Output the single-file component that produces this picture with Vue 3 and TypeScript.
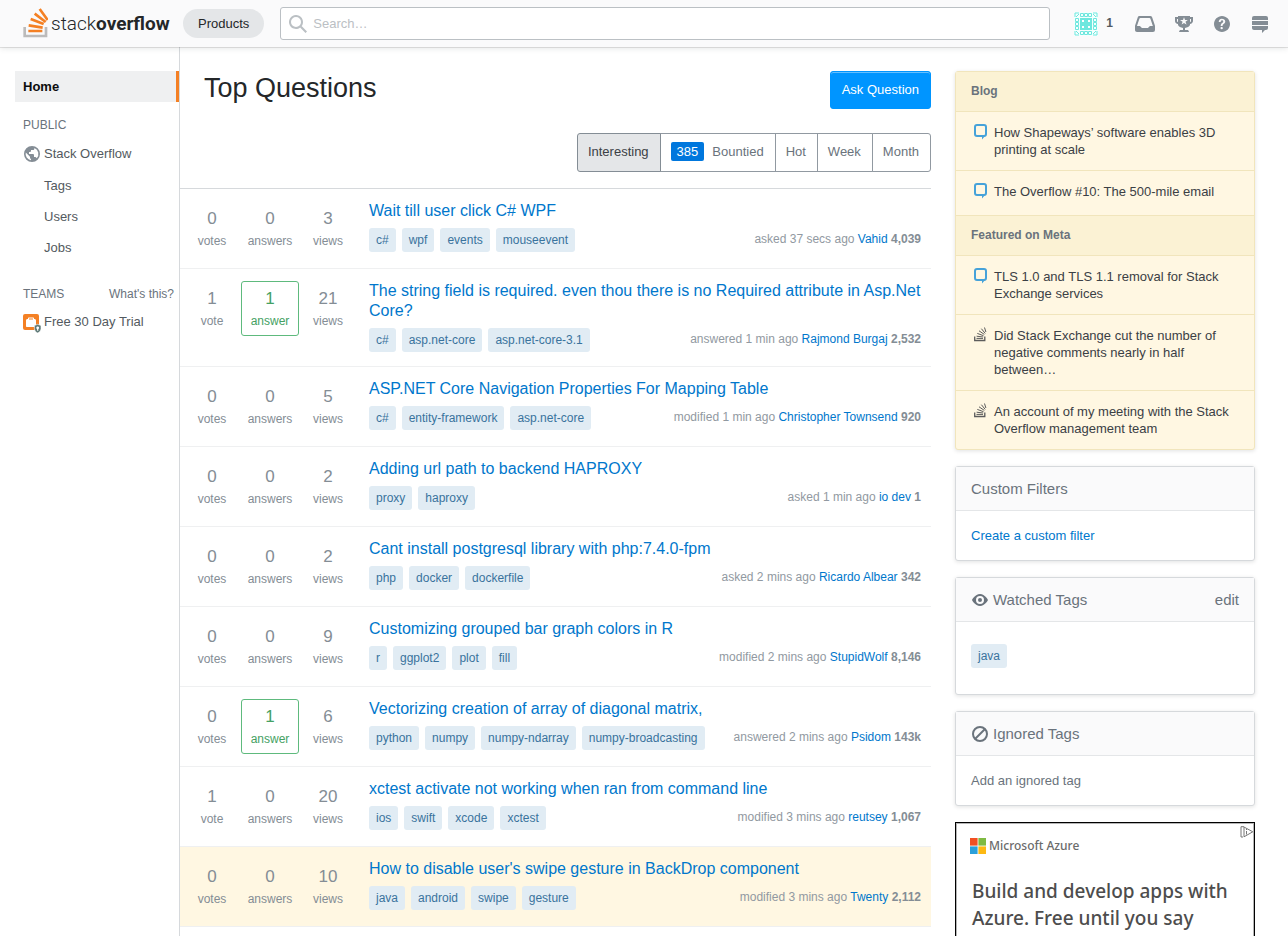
<script setup lang="ts">
import { ref } from 'vue'

interface Question {
  votes: number
  answers: number
  views: number
  title: string
  tags: string[]
  action: string
  user: string
  rep: string
  watched?: boolean
}

interface BulletinItem {
  icon: 'meta' | 'so'
  text: string
}

const questions: Question[] = [
  { votes: 0, answers: 0, views: 3, title: 'Wait till user click C# WPF', tags: ['c#', 'wpf', 'events', 'mouseevent'], action: 'asked 37 secs ago', user: 'Vahid', rep: '4,039' },
  { votes: 1, answers: 1, views: 21, title: 'The string field is required. even thou there is no Required attribute in Asp.Net Core?', tags: ['c#', 'asp.net-core', 'asp.net-core-3.1'], action: 'answered 1 min ago', user: 'Rajmond Burgaj', rep: '2,532' },
  { votes: 0, answers: 0, views: 5, title: 'ASP.NET Core Navigation Properties For Mapping Table', tags: ['c#', 'entity-framework', 'asp.net-core'], action: 'modified 1 min ago', user: 'Christopher Townsend', rep: '920' },
  { votes: 0, answers: 0, views: 2, title: 'Adding url path to backend HAPROXY', tags: ['proxy', 'haproxy'], action: 'asked 1 min ago', user: 'io dev', rep: '1' },
  { votes: 0, answers: 0, views: 2, title: 'Cant install postgresql library with php:7.4.0-fpm', tags: ['php', 'docker', 'dockerfile'], action: 'asked 2 mins ago', user: 'Ricardo Albear', rep: '342' },
  { votes: 0, answers: 0, views: 9, title: 'Customizing grouped bar graph colors in R', tags: ['r', 'ggplot2', 'plot', 'fill'], action: 'modified 2 mins ago', user: 'StupidWolf', rep: '8,146' },
  { votes: 0, answers: 1, views: 6, title: 'Vectorizing creation of array of diagonal matrix,', tags: ['python', 'numpy', 'numpy-ndarray', 'numpy-broadcasting'], action: 'answered 2 mins ago', user: 'Psidom', rep: '143k' },
  { votes: 1, answers: 0, views: 20, title: 'xctest activate not working when ran from command line', tags: ['ios', 'swift', 'xcode', 'xctest'], action: 'modified 3 mins ago', user: 'reutsey', rep: '1,067' },
  { votes: 0, answers: 0, views: 10, title: "How to disable user's swipe gesture in BackDrop component", tags: ['java', 'android', 'swipe', 'gesture'], action: 'modified 3 mins ago', user: 'Twenty', rep: '2,112', watched: true },
]

const bulletin: { heading: string; items: BulletinItem[] }[] = [
  {
    heading: 'Blog',
    items: [
      { icon: 'meta', text: 'How Shapeways’ software enables 3D printing at scale' },
      { icon: 'meta', text: 'The Overflow #10: The 500-mile email' },
    ],
  },
  {
    heading: 'Featured on Meta',
    items: [
      { icon: 'meta', text: 'TLS 1.0 and TLS 1.1 removal for Stack Exchange services' },
      { icon: 'so', text: 'Did Stack Exchange cut the number of negative comments nearly in half between…' },
      { icon: 'so', text: 'An account of my meeting with the Stack Overflow management team' },
    ],
  },
]

const tabs: { label: string; count?: number }[] = [
  { label: 'Interesting' },
  { label: 'Bountied', count: 385 },
  { label: 'Hot' },
  { label: 'Week' },
  { label: 'Month' },
]

const activeTab = ref('Interesting')
const query = ref('')

const plural = (n: number, word: string): string => (n === 1 ? word : word + 's')
</script>

<template>
  <div class="page">
    <header class="topbar">
      <a class="logo" href="#" aria-label="Stack Overflow">
        <svg class="logo-mark" viewBox="0 0 75 90" width="25" height="30" fill="none" aria-hidden="true">
          <path d="M5 57V84H69V57" stroke="#bcbbbb" stroke-width="8" />
          <g stroke="#f48024" stroke-width="8">
            <path d="M16 69H58M17 52L59 59M23 33L62 48M35 17L68 42M50 3L74 36" />
          </g>
        </svg>
        <span class="logo-text"><span class="logo-light">stack</span><b>overflow</b></span>
      </a>
      <button class="products" type="button">Products</button>
      <form class="search" role="search" @submit.prevent>
        <svg class="search-icon" width="18" height="18" viewBox="0 0 18 18" aria-hidden="true">
          <path d="M18 16.5l-5.14-5.18h-.35a7 7 0 10-1.19 1.19v.35L16.5 18l1.5-1.5zM12 7A5 5 0 112 7a5 5 0 0110 0z" />
        </svg>
        <input v-model="query" type="text" placeholder="Search…" aria-label="Search" />
      </form>
      <nav class="tools" aria-label="Account">
        <a class="me" href="#" aria-label="Profile, reputation 1">
          <svg width="24" height="24" viewBox="0 0 24 24" aria-hidden="true">
            <rect width="24" height="24" fill="#f4fffe" />
            <rect x="6" y="6" width="12" height="12" fill="#6ee7de" />
            <path d="M8 8h2v2H8zM14 8h2v2h-2zM8 14h2v2H8zM14 14h2v2h-2z" fill="#fff" />
            <g fill="none" stroke="#6ee7de">
              <path d="M1 5V1h4M19 1h4v4M1 19v4h4M23 19v4h-4M2 5l3-3M19 2l3 3M2 19l3 3M22 19l-3 3" />
              <path d="M6.500 1.500h3v3h-3zM10.500 1.500h3v3h-3zM14.500 1.500h3v3h-3zM6.500 19.500h3v3h-3zM10.500 19.500h3v3h-3zM14.500 19.500h3v3h-3zM1.500 6.500h3v3h-3zM1.500 10.500h3v3h-3zM1.500 14.500h3v3h-3zM19.500 6.500h3v3h-3zM19.500 10.500h3v3h-3zM19.500 14.500h3v3h-3z" />
            </g>
          </svg>
          <span class="my-rep">1</span>
        </a>
        <a href="#" aria-label="Inbox">
          <svg width="20" height="18" viewBox="0 0 20 18"><path d="M15.190 1H4.630c-.85 0-1.600.54-1.850 1.350L0 10.790V15c0 1.100.9 2 2 2h16a2 2 0 002-2v-4.210l-2.870-8.440A2 2 0 0015.190 1zm-.28 10l-2 2h-6l-2-2H1.960L4.400 3.680A1 1 0 015.350 3h9.120c.44 0 .83.28.96.7L17.860 11h-2.950z" /></svg>
        </a>
        <a href="#" aria-label="Achievements">
          <svg width="18" height="18" viewBox="0 0 18 18"><path d="M15 2V1H3v1H0v4c0 1.600 1.400 3 3 3v1c.4 1.500 3 2.600 5 3v2H5s-1 1.500-1 2h10c0-.4-1-2-1-2h-3v-2c2-.4 4.600-1.500 5-3V9c1.600-.2 3-1.400 3-3V2h-3zM3 7c-.5 0-1-.5-1-1V4h1v3zm8.400 2.500L9 8 6.600 9.400l1-2.700L5 5h3l1-2.700L10 5h2.800l-2.300 1.800 1 2.700h-.1zM16 6c0 .5-.5 1-1 1V4h1v2z" /></svg>
        </a>
        <a href="#" aria-label="Help">
          <svg width="18" height="18" viewBox="0 0 18 18"><path d="M9 1C4.640 1 1 4.640 1 9c0 4.360 3.640 8 8 8 4.360 0 8-3.640 8-8 0-4.360-3.640-8-8-8zm.81 12.130c-.02.71-.55 1.150-1.240 1.130-.66-.02-1.170-.49-1.150-1.200.02-.72.56-1.180 1.220-1.160.7.03 1.200.51 1.170 1.230zM11.770 8c-.59.66-1.780 1.090-2.050 1.970a4 4 0 00-.09.75c0 .05-.03.16-.18.16H7.880c-.16 0-.18-.1-.18-.15.06-1.350.66-2.200 1.830-2.880.39-.29.7-.75.7-1.240.01-1.240-1.640-1.820-2.350-.72-.21.33-.18.73-.18 1.100H5.750c0-1.970 1.030-3.260 3.030-3.260 1.750 0 3.470.87 3.470 2.830 0 .57-.2 1.050-.48 1.440z" /></svg>
        </a>
        <a href="#" aria-label="Site switcher">
          <svg width="18" height="18" viewBox="0 0 18 18"><path d="M15 1H3a2 2 0 00-2 2v2h16V3a2 2 0 00-2-2zM1 13c0 1.100.9 2 2 2h8v3l3-3h1a2 2 0 002-2v-2H1v2zm16-7H1v4h16V6z" /></svg>
        </a>
      </nav>
    </header>

    <div class="body">
      <nav class="side" aria-label="Primary">
        <a class="side-link home" href="#">Home</a>
        <div class="side-head"><span>PUBLIC</span></div>
        <a class="side-link with-icon" href="#">
          <svg width="18" height="18" viewBox="0 0 18 18" fill="#848d95" aria-hidden="true"><path d="M9 1a8 8 0 100 16A8 8 0 009 1zM8 15.320a6.460 6.460 0 01-4.300-2.740 6.460 6.460 0 01-.93-5.010L7 11.680v.8c0 .88.12 1.320 1 1.320v1.520zm5.720-2c-.2-.66-1-1.320-1.720-1.320h-1v-2c0-.44-.56-1-1-1H6V7h1c.44 0 1-.56 1-1V5h2c.88 0 1.400-.72 1.400-1.600v-.33a6.450 6.450 0 013.830 4.510 6.450 6.450 0 01-1.510 5.730v.01z" /></svg>
          Stack Overflow
        </a>
        <a class="side-link nested" href="#">Tags</a>
        <a class="side-link nested" href="#">Users</a>
        <a class="side-link nested" href="#">Jobs</a>
        <div class="side-head teams"><span>TEAMS</span><a href="#">What's this?</a></div>
        <a class="side-link with-icon" href="#">
          <svg width="18" height="22" viewBox="0 -3 18 22" aria-hidden="true">
            <rect width="16" height="16" rx="2" fill="#f48024" />
            <path d="M3 6.500C3 5.700 3.600 5 4.500 5H5V4.500c0-.6.400-1 1-1h4c.6 0 1 .4 1 1V5h.5c.8 0 1.500.7 1.500 1.500V12c0 .6-.4 1-1 1H4c-.6 0-1-.4-1-1zM6 4.500V5.500h4v-1z" fill="#fff" />
            <path d="M14.700 10.300l3.300 1.200v3c0 2.200-1.400 3.600-3.300 4.500-1.900-.9-3.300-2.300-3.300-4.500v-3z" fill="#5f7a77" stroke="#fff" stroke-width=".6" />
            <path d="M14.700 12.500a1.300 1.300 0 01.6 2.500v1.700h-1.200V15a1.300 1.300 0 01.6-2.500z" fill="#fff" />
          </svg>
          Free 30 Day Trial
        </a>
      </nav>

      <main class="main">
        <div class="main-head">
          <h1>Top Questions</h1>
          <button class="ask" type="button">Ask Question</button>
        </div>
        <div class="tabs" role="group" aria-label="Filter questions">
          <button
            v-for="tab in tabs"
            :key="tab.label"
            type="button"
            :class="{ active: tab.label === activeTab }"
            :aria-pressed="tab.label === activeTab"
            @click="activeTab = tab.label"
          >
            <span v-if="tab.count" class="bounty">{{ tab.count }}</span>{{ tab.label }}
          </button>
        </div>
        <div class="list">
          <article v-for="q in questions" :key="q.title" class="question" :class="{ watched: q.watched }">
            <div class="stats">
              <div class="stat"><span class="num">{{ q.votes }}</span><span>{{ plural(q.votes, 'vote') }}</span></div>
              <div class="stat" :class="{ answered: q.answers > 0 }"><span class="num">{{ q.answers }}</span><span>{{ plural(q.answers, 'answer') }}</span></div>
              <div class="stat"><span class="num">{{ q.views }}</span><span>{{ plural(q.views, 'view') }}</span></div>
            </div>
            <div class="summary">
              <h3><a href="#">{{ q.title }}</a></h3>
              <div class="meta">
                <div class="tags"><a v-for="t in q.tags" :key="t" class="tag" href="#">{{ t }}</a></div>
                <div class="started">{{ q.action }} <a href="#">{{ q.user }}</a> <b>{{ q.rep }}</b></div>
              </div>
            </div>
          </article>
        </div>
      </main>

      <aside class="aside">
        <section class="card bulletin">
          <template v-for="group in bulletin" :key="group.heading">
            <h2>{{ group.heading }}</h2>
            <a v-for="item in group.items" :key="item.text" class="news" href="#">
              <svg v-if="item.icon === 'meta'" width="14" height="16" viewBox="0 0 14 16" fill="none" aria-hidden="true">
                <rect x="1" y="1" width="11" height="11" rx="2" stroke="#46a2d9" stroke-width="2" />
                <path d="M6.500 12H11L8 15.500V13z" fill="#46a2d9" />
              </svg>
              <svg v-else width="14" height="16" viewBox="0 0 14 16" fill="none" stroke="#5c5c5c" aria-hidden="true">
                <path d="M.7 9.500V13.500H10.800V9.500" stroke-width="1.300" />
                <path d="M2.500 11.400H9M2.600 9.200L9.100 10M3.300 6.400L9.500 8.700M5 3.800L10.300 7.400M7.400 1.700L11.200 6.400M10.500.5L11.900 5" />
              </svg>
              <span>{{ item.text }}</span>
            </a>
          </template>
        </section>

        <section class="card">
          <h2>Custom Filters</h2>
          <div class="card-body"><a class="blue" href="#">Create a custom filter</a></div>
        </section>

        <section class="card">
          <h2>
            <svg width="18" height="18" viewBox="0 0 18 18" fill="#6a737c" aria-hidden="true"><path d="M9.060 3C4 3 1 9 1 9s3 6 8.060 6C14 15 17 9 17 9s-3-6-7.940-6zM9 13a4 4 0 110-8 4 4 0 010 8zm0-2a2 2 0 002-2 2 2 0 00-2-2 2 2 0 00-2 2 2 2 0 002 2z" /></svg>
            Watched Tags
            <a class="edit" href="#">edit</a>
          </h2>
          <div class="card-body roomy"><a class="tag" href="#">java</a></div>
        </section>

        <section class="card">
          <h2>
            <svg width="18" height="18" viewBox="0 0 18 18" fill="none" stroke="#6a737c" stroke-width="2" aria-hidden="true"><circle cx="9" cy="9" r="7" /><path d="M4 14L14 4" /></svg>
            Ignored Tags
          </h2>
          <div class="card-body"><a href="#">Add an ignored tag</a></div>
        </section>

        <section class="ad" aria-label="Advertisement">
          <svg class="adchoices" width="14" height="12" viewBox="0 0 14 12" fill="none" stroke="#777" aria-hidden="true">
            <path d="M4 .7H1V11h2M4 1L12.800 5.800L4 10.800Z" />
            <path d="M6.500 3v1M6.500 5v3.500" />
          </svg>
          <div class="azure">
            <svg width="16" height="16" viewBox="0 0 16 16" aria-hidden="true">
              <path fill="#f25022" d="M0 0h7.600v7.600H0z" /><path fill="#7fba42" d="M8.400 0H16v7.600H8.400z" />
              <path fill="#2ba0da" d="M0 8.400h7.600V16H0z" /><path fill="#fdb913" d="M8.400 8.400H16V16H8.400z" />
            </svg>
            Microsoft Azure
          </div>
          <p>Build and develop apps with Azure. Free until you say</p>
        </section>
      </aside>
    </div>
  </div>
</template>

<style>
html {
  background: #fff;
}
</style>

<style scoped>
.page {
  min-height: 100vh;
  display: flex;
  flex-direction: column;
  font-family: "Liberation Sans", Arial, sans-serif;
  font-size: 13px;
  line-height: 17px;
  color: #242729;
}
.page *,
.page {
  box-sizing: border-box;
}
a {
  color: inherit;
  text-decoration: none;
}
button,
input {
  font: inherit;
  margin: 0;
}
svg {
  flex: none;
  display: block;
}

/* Top bar */
.topbar {
  position: sticky;
  top: 0;
  z-index: 2;
  flex: none;
  height: 47px;
  padding: 0 19px 0 23px;
  display: flex;
  align-items: center;
  background: #fafafb;
  box-shadow: 0 1px 0 rgba(12, 13, 14, 0.1), 0 1px 6px rgba(59, 64, 69, 0.15);
}
.logo {
  width: 160px;
  flex: none;
  display: flex;
  align-items: center;
  gap: 3px;
  font-family: Roboto, sans-serif;
  font-size: 19px;
  line-height: 32px;
}
.logo-mark {
  margin-bottom: 2px;
}
.logo-text {
  padding-top: 1px;
}
.logo-light {
  font-weight: 300;
}
.products {
  height: 29px;
  padding: 0 15px;
  border: 0;
  border-radius: 15px;
  background: #e4e6e8;
  color: #242729;
}
.search {
  flex: 1;
  margin: 0 24px 0 16px;
  display: flex;
  align-items: center;
  height: 33px;
  border: 1px solid #bbc0c4;
  border-radius: 3px;
  background: #fff;
}
.search-icon {
  margin: 0 6px 0 8px;
  fill: #bbc0c4;
}
.search input {
  flex: 1;
  min-width: 0;
  height: 100%;
  border: 0;
  padding: 0;
  outline: 0;
  background: none;
}
.search input::placeholder {
  color: #bbc0c4;
  opacity: 1;
}
.tools {
  display: flex;
  align-items: center;
  gap: 20px;
  fill: #848d95;
}
.me {
  display: flex;
  align-items: center;
  gap: 8px;
  margin-right: 2px;
}
.my-rep {
  font-size: 12px;
  font-weight: 700;
  color: #535a60;
}

.body {
  flex: 1;
  display: flex;
  padding: 0 33px 0 15px;
}

/* Left navigation */
.side {
  flex: none;
  width: 165px;
  padding-top: 24px;
  border-right: 1px solid #d6d9dc;
  color: #535a60;
}
.side-link {
  display: flex;
  align-items: center;
  height: 31px;
  padding-left: 8px;
}
.side-link.home {
  background: #eff0f1;
  color: #0c0d0e;
  font-weight: 700;
  border-right: 3px solid #f48024;
}
.side-link.with-icon {
  gap: 3px;
}
.side-link.nested {
  padding-left: 29px;
}
.side-head {
  display: flex;
  justify-content: space-between;
  margin-top: 15px;
  padding: 0 5px 5px 8px;
  font-size: 12px;
  line-height: 16px;
  color: #6a737c;
}
.with-icon + .nested {
  margin-top: 1px;
}
.side-head.teams {
  margin-top: 23px;
  padding-bottom: 4px;
}

/* Questions */
.main {
  flex: 1;
  min-width: 0;
  padding-top: 24px;
}
.main-head {
  display: flex;
  justify-content: space-between;
  align-items: flex-start;
  padding-left: 24px;
  margin-bottom: 24px;
}
h1 {
  margin: 0;
  font-size: 27px;
  line-height: 35px;
  font-weight: 400;
}
.ask {
  height: 38px;
  padding: 0 11px 2px;
  border: 1px solid #0095ff;
  border-radius: 3px;
  background: #0095ff;
  color: #fff;
  box-shadow: inset 0 1px 0 rgba(255, 255, 255, 0.4);
}
.tabs {
  display: flex;
  justify-content: flex-end;
  margin-bottom: 16px;
}
.tabs button {
  height: 39px;
  padding: 0 11px 2px 10px;
  margin-left: -1px;
  border: 1px solid #9199a1;
  background: #fff;
  color: #6a737c;
}
.tabs button:first-child {
  border-radius: 3px 0 0 3px;
}
.tabs button:last-child {
  border-radius: 0 3px 3px 0;
}
.tabs button.active {
  position: relative;
  background: #e4e6e8;
  border-color: #848d95;
  color: #3b4045;
}
.bounty {
  display: inline-block;
  margin-right: 8px;
  padding: 1px 6px;
  border-radius: 2px;
  background: #0077dd;
  color: #fff;
}
.list {
  border-top: 1px solid #d6d9dc;
}
.question {
  display: flex;
  padding: 12px 10px 12px 3px;
  border-bottom: 1px solid #eff0f1;
}
.question.watched {
  background: #fff7e2;
}
.stats {
  flex: none;
  display: flex;
  align-items: flex-start;
  margin-right: 12px;
}
.stat {
  width: 58px;
  padding: 8px 0 6px;
  border: 1px solid transparent;
  border-radius: 3px;
  display: flex;
  flex-direction: column;
  gap: 6px;
  text-align: center;
  font-size: 12px;
  line-height: 15px;
  color: #848d95;
}
.num {
  font-size: 17px;
  line-height: 18px;
}
.stat.answered {
  border-color: #5eba7d;
  color: #45a163;
}
.summary {
  flex: 1;
  min-width: 0;
  padding-bottom: 2px;
}
h3 {
  margin: 0 0 7px;
  font-size: 16px;
  line-height: 20px;
  font-weight: 400;
  color: #0077cc;
}
.meta {
  display: flex;
  justify-content: space-between;
  font-size: 12px;
  line-height: 24px;
}
.tags {
  display: flex;
  gap: 6px;
}
.tag {
  padding: 0 7px;
  border-radius: 3px;
  background: #e1ecf4;
  color: #39739d;
  font-size: 12px;
  line-height: 24px;
}
.started {
  color: #9199a1;
  line-height: 22px;
}
.started a {
  color: #0077cc;
}
.started b {
  color: #848d95;
}

/* Right column */
.aside {
  flex: none;
  width: 300px;
  margin-left: 24px;
  padding-top: 24px;
  display: flex;
  flex-direction: column;
  gap: 16px;
}
.card {
  border: 1px solid #d6d9dc;
  border-radius: 3px;
  background: #fff;
  box-shadow: 0 1px 4px rgba(12, 13, 14, 0.12);
  color: #6a737c;
}
.card h2 {
  display: flex;
  align-items: center;
  gap: 4px;
  margin: 0;
  height: 44px;
  padding: 0 15px;
  border-bottom: 1px solid #e4e6e8;
  background: #fafafb;
  font-size: 15px;
  font-weight: 400;
}
.edit {
  margin-left: auto;
}
.card-body {
  padding: 16px 15px;
}
.card-body.roomy {
  display: flex;
  padding: 22px 15px 26px;
}
.blue {
  color: #0077cc;
}
.bulletin {
  border-color: #f1e5bc;
  background: #fff7e2;
  color: #3b4045;
}
.bulletin h2 {
  height: 40px;
  border-color: #f1e5bc;
  background: #fbf2d4;
  color: #6a737c;
  font-size: 12px;
  font-weight: 700;
}
.news {
  display: flex;
  gap: 6px;
  min-height: 45px;
  padding: 12px 15px 12px 18px;
  border-bottom: 1px solid #f1e5bc;
}
.news:last-child {
  border-bottom: 0;
}

/* Advert */
.ad {
  position: relative;
  border: 1px solid #000;
  box-shadow: inset 0 0 0 1px #b5b5b5;
  padding: 14px 14px 24px;
  background: #fff;
  font-family: "Noto Sans", sans-serif;
  color: #4d4d4d;
}
.adchoices {
  position: absolute;
  top: 3px;
  right: 0;
}
.azure {
  display: flex;
  align-items: center;
  gap: 3px;
  font-size: 12px;
  font-weight: 500;
  color: #6b6b6b;
}
.ad p {
  margin: 24px 0 0 2px;
  font-size: 19px;
  line-height: 27px;
  font-weight: 500;
}
</style>
